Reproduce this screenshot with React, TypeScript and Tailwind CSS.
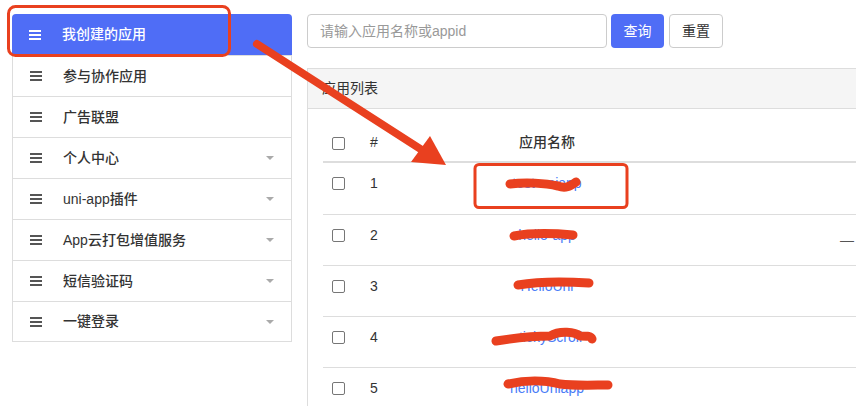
const menu = [
  { label: "我创建的应用", active: true },
  { label: "参与协作应用" },
  { label: "广告联盟" },
  { label: "个人中心", caret: true },
  { label: "uni-app插件", caret: true },
  { label: "App云打包增值服务", caret: true },
  { label: "短信验证码", caret: true },
  { label: "一键登录", caret: true },
];

const apps = [
  { id: 1, name: "test-uniapp" },
  { id: 2, name: "hello-app", extra: "—" },
  { id: 3, name: "HelloUni" },
  { id: 4, name: "stickyScroll" },
  { id: 5, name: "helloUniapp" },
];

const font = "font-['Liberation_Sans','Noto_Sans_CJK_SC',sans-serif]";

function MenuIcon({ light }: { light?: boolean }) {
  return (
    <svg width="12" height="12" viewBox="0 0 12 12" className="shrink-0">
      <g fill={light ? "#ffffff" : "#555555"}>
        <rect x="0" y="1" width="12" height="2" />
        <rect x="0" y="5" width="12" height="2" />
        <rect x="0" y="9" width="12" height="2" />
      </g>
    </svg>
  );
}

function Caret() {
  return (
    <svg width="8" height="4" viewBox="0 0 8 4" className="shrink-0">
      <path d="M0 0 L8 0 L4 4 Z" fill="#aaaaaa" />
    </svg>
  );
}

function Checkbox() {
  return <span className="block w-[13px] h-[13px] rounded-[2px] border border-[#767676] bg-white" />;
}

function Sidebar() {
  return (
    <div className="w-[280px] shrink-0">
      {menu.map((item, i) =>
        item.active ? (
          <div
            key={item.label}
            className="h-[41px] flex items-center pl-[17px] rounded-t-[4px] bg-[#4f6df6] text-white"
          >
            <MenuIcon light />
            <span className="ml-[21px] text-[14px] font-medium">{item.label}</span>
          </div>
        ) : (
          <div
            key={item.label}
            className={
              "h-[41px] flex items-center pl-[17px] pr-[17px] border-x border-t border-[#dddddd] text-[#333333] " +
              (i === menu.length - 1 ? "border-b" : "")
            }
          >
            <MenuIcon />
            <span className="ml-[21px] text-[14px] font-medium flex-1">{item.label}</span>
            {item.caret && <Caret />}
          </div>
        )
      )}
    </div>
  );
}

function Annotations() {
  const red = "#e9401f";
  return (
    <svg
      className="absolute inset-0 pointer-events-none"
      width="856"
      height="406"
      viewBox="0 0 856 406"
    >
      <rect x="8.5" y="6.5" width="221" height="49" rx="7" fill="none" stroke={red} strokeWidth="3" />
      <line x1="257" y1="44" x2="422" y2="150" stroke={red} strokeWidth="8" strokeLinecap="round" />
      <path d="M411 162 L430 136 L446 165 Z" fill={red} />
      <rect x="475" y="164.5" width="152" height="43" rx="4" fill="none" stroke={red} strokeWidth="3" />
      <g fill="none" stroke={red} strokeWidth="9" strokeLinecap="round" strokeLinejoin="round">
        <path d="M510 184 C 525 182, 545 183, 558 186 C 566 189, 570 186, 576 182" />
        <path d="M514 236 C 530 233, 550 233, 573 235" />
        <path d="M518 285 C 535 282, 560 281, 589 283" />
        <path d="M496 341 C 515 338, 535 336, 550 336 C 560 330, 575 332, 580 336 C 588 336, 591 336, 592 339" />
        <path d="M508 384 C 525 380, 545 380, 560 384 C 575 386, 595 385, 608 385" />
      </g>
    </svg>
  );
}

export default function App() {
  return (
    <div className={`relative w-[856px] h-[406px] overflow-hidden bg-white ${font}`}>
      <div className="flex pl-3 pt-[14px]">
        <Sidebar />

        <div className="ml-[15px] w-[620px] shrink-0">
          <div className="flex items-center">
            <div className="w-[300px] h-[34px] flex items-center px-3 border border-[#cccccc] rounded-[4px] text-[14px] text-[#999999]">
              请输入应用名称或appid
            </div>
            <button className="ml-[4px] w-[53px] h-[34px] rounded-[4px] bg-[#4f6df6] text-white text-[14px]">
              查询
            </button>
            <button className="ml-[5px] w-[54px] h-[34px] rounded-[4px] border border-[#cccccc] bg-white text-[#333333] text-[14px]">
              重置
            </button>
          </div>

          <div className="mt-[20px] border-l border-[#dddddd]">
            <div className="h-[41px] flex items-center px-[14px] bg-[#f5f5f5] border-y border-[#dddddd] text-[14px] text-[#333333]">
              应用列表
            </div>
            <div className="pl-[15px] pt-[15px]">
              <div className="h-[39px] flex items-end pb-[8px] border-b-2 border-[#dddddd] text-[14px] text-[#333333] font-medium">
                <div className="w-[39px] pl-[9px] pb-[3px]">
                  <Checkbox />
                </div>
                <div className="w-[89px] pl-[8px]">#</div>
                <div className="w-[192px] text-center">应用名称</div>
              </div>
              {apps.map((app, i) => (
                <div
                  key={app.id}
                  className={
                    "h-[51px] flex items-start pt-[10px] text-[14px] text-[#333333] " +
                    (i > 0 ? "border-t border-[#dddddd]" : "")
                  }
                >
                  <div className="w-[39px] pl-[9px] pt-[4px]">
                    <Checkbox />
                  </div>
                  <div className="w-[89px] pl-[8px] leading-[20px]">{app.id}</div>
                  <div className="w-[192px] text-center leading-[20px] text-[#4a7cf7]">{app.name}</div>
                  <div className="flex-1 text-right pr-[73px] leading-[30px] text-[#555555]">
                    {app.extra ?? ""}
                  </div>
                </div>
              ))}
            </div>
          </div>
        </div>
      </div>
      <Annotations />
    </div>
  );
}
